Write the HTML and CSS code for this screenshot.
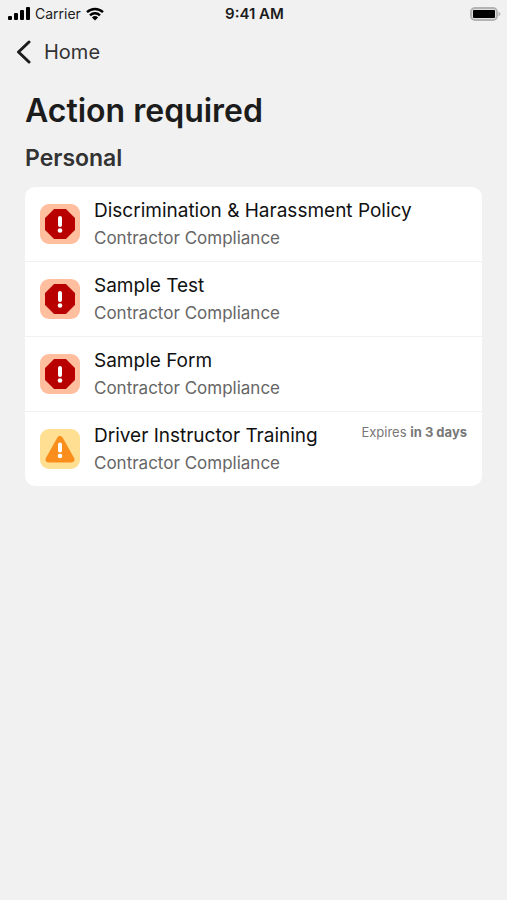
FILE: index.html
```html
<!DOCTYPE html>
<html lang="en">

<head>
  <meta charset="utf-8">
  <meta name="viewport" content="width=device-width, initial-scale=1">
  <title>Action required</title>
  <link rel="stylesheet" href="styles.css">
</head>

<body>
  <!-- shared icons -->
  <svg class="sprite" aria-hidden="true">
    <symbol id="icon-danger" viewBox="0 0 40 40">
      <rect width="40" height="40" rx="9" fill="#ffbe9d"/>
      <path d="M14.500 6h11L34 14.500v11L25.500 34h-11L6 25.500v-11z" fill="#b80000" stroke="#b80000" stroke-width="2" stroke-linejoin="round"/>
      <path d="M20 14v7" stroke="#fff" stroke-width="4" stroke-linecap="round"/>
      <circle cx="20" cy="26.500" r="2.300" fill="#fff"/>
    </symbol>
    <symbol id="icon-warning" viewBox="0 0 40 40">
      <rect width="40" height="40" rx="9" fill="#ffe093"/>
      <path d="M20 10L31.500 30.500h-23z" fill="#f98e1d" stroke="#f98e1d" stroke-width="6" stroke-linejoin="round"/>
      <path d="M20 15.500v6" stroke="#fff" stroke-width="4" stroke-linecap="round"/>
      <circle cx="20" cy="27" r="2.300" fill="#fff"/>
    </symbol>
  </svg>

  <div class="status-bar">
    <div class="carrier">
      <svg width="22" height="14" viewBox="0 0 22 14" aria-hidden="true">
        <rect x="0" y="9" width="4" height="4" rx="1"/>
        <rect x="6" y="6" width="4" height="7" rx="1"/>
        <rect x="12" y="3" width="4" height="10" rx="1"/>
        <rect x="18" y="0" width="4" height="13" rx="1"/>
      </svg>
      <span>Carrier</span>
      <svg width="18" height="14" viewBox="0 0 18 14" aria-hidden="true">
        <path d="M1 5.200a11.500 11.500 0 0 1 16 0M4 8.300a7.300 7.300 0 0 1 10 0" fill="none" stroke="#000" stroke-width="2.400"/>
        <path d="M9 13.500L5.900 10.500a4.500 4.500 0 0 1 6.200 0z"/>
      </svg>
    </div>
    <span class="time">9:41 AM</span>
    <svg class="battery" width="31" height="14" viewBox="0 0 31 14" aria-hidden="true">
      <rect x="1" y="1" width="26" height="12" rx="4" fill="#dedede" stroke="#b3b3b3" stroke-width="2"/>
      <rect x="3" y="3" width="22" height="8" rx="1"/>
      <path d="M28.500 4.500q4 2.500 0 5z" fill="#b3b3b3"/>
    </svg>
  </div>

  <nav>
    <a class="back" href="#">
      <svg width="16" height="24" viewBox="0 0 16 24" aria-hidden="true">
        <path d="M13 2L2.500 12L13 22" fill="none" stroke="#1c1c1c" stroke-width="3" stroke-linecap="round" stroke-linejoin="round"/>
      </svg>
      <span>Home</span>
    </a>
  </nav>

  <main>
    <h1>Action required</h1>
    <h2>Personal</h2>

    <ul class="list">
      <li class="item">
        <svg class="icon" aria-hidden="true"><use href="#icon-danger"/></svg>
        <div class="text">
          <p class="name">Discrimination &amp; Harassment Policy</p>
          <p class="group">Contractor Compliance</p>
        </div>
      </li>
      <li class="item">
        <svg class="icon" aria-hidden="true"><use href="#icon-danger"/></svg>
        <div class="text">
          <p class="name">Sample Test</p>
          <p class="group">Contractor Compliance</p>
        </div>
      </li>
      <li class="item">
        <svg class="icon" aria-hidden="true"><use href="#icon-danger"/></svg>
        <div class="text">
          <p class="name">Sample Form</p>
          <p class="group">Contractor Compliance</p>
        </div>
      </li>
      <li class="item">
        <svg class="icon" aria-hidden="true"><use href="#icon-warning"/></svg>
        <div class="text">
          <p class="name">Driver Instructor Training</p>
          <p class="group">Contractor Compliance</p>
        </div>
        <p class="expires">Expires <strong>in 3 days</strong></p>
      </li>
    </ul>
  </main>
</body>

</html>
```
FILE: styles.css
```css
body {
  margin: 0;
  background-color: #f1f1f1;
  font-family: Inter, "Liberation Sans", sans-serif;
  color: #1c1c1c;
}

h1, h2, p, ul {
  margin: 0;
  padding: 0;
}

.sprite {
  display: none;
}

/* status bar */
.status-bar {
  display: grid;
  grid-template-columns: 1fr auto 1fr;
  align-items: center;
  height: 27px;
  padding: 0 6px 0 8px;
  font-size: 14px;
}

.carrier {
  display: flex;
  align-items: center;
  gap: 5px;
}

.time {
  font-size: 15px;
  font-weight: 600;
}

.battery {
  justify-self: end;
}

/* back link */
.back {
  display: inline-flex;
  align-items: center;
  gap: 12px;
  height: 50px;
  padding-left: 16px;
  font-size: 20px;
  color: #333;
  text-decoration: none;
}

main {
  padding: 11px 25px;
}

h1 {
  font-size: 32px;
  font-weight: 600;
  line-height: 46px;
}

h2 {
  margin-bottom: 5px;
  font-size: 23px;
  font-weight: 600;
  line-height: 48px;
  color: #333;
}

/* list of items */
.list {
  background-color: #fff;
  border-radius: 10px;
  list-style: none;
}

.item {
  display: flex;
  align-items: center;
  padding: 10px 15px;
}

.item + .item {
  border-top: 1px solid #f1f1f1;
}

.icon {
  flex: none;
  width: 40px;
  height: 40px;
  margin-right: 14px;
}

.text {
  flex: 1;
}

.name {
  font-size: 19px;
  line-height: 28px;
  color: #111;
}

.group {
  font-size: 17px;
  line-height: 26px;
  color: #666;
}

.expires {
  align-self: flex-start;
  font-size: 13px;
  line-height: 20px;
  color: #777;
}
```
